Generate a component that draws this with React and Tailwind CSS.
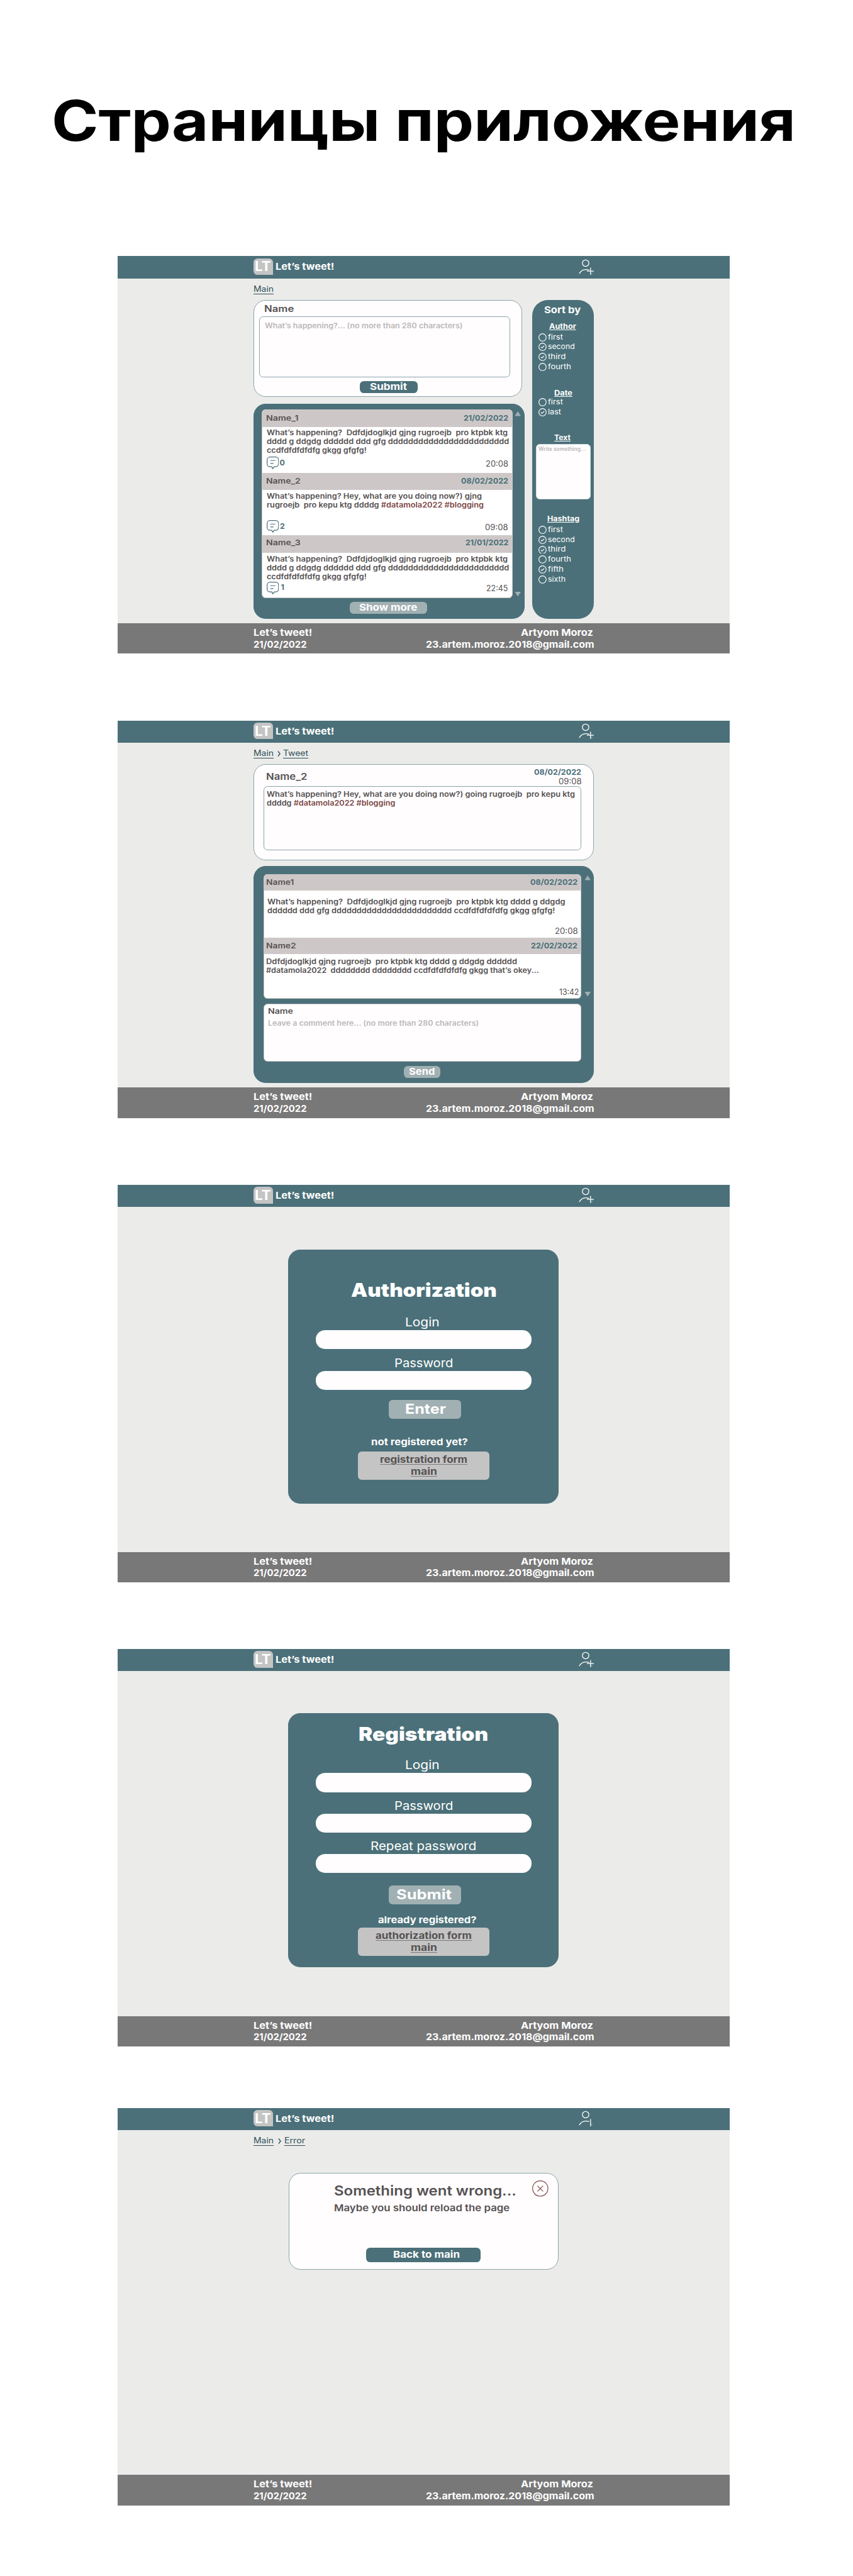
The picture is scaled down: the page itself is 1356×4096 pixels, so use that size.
import { useLayoutEffect, useRef, useState } from "react";

/* One line of text, widened or narrowed so that it spans `w` pixels. */
function Line({ w, className = "", children }) {
  const ref = useRef(null);
  const [ratio, setRatio] = useState(1);
  useLayoutEffect(() => {
    const el = ref.current;
    el.style.transform = "none";
    const next = (w + 1) / el.getBoundingClientRect().width;
    el.style.transform = `scaleX(${next})`;
    setRatio(next);
  }, [w, children]);
  return (
    <span className={`inline-block whitespace-pre ${className}`} style={{ width: w + 1 }}>
      <span ref={ref} className="block w-max origin-left" style={{ transform: `scaleX(${ratio})` }}>
        {children}
      </span>
    </span>
  );
}

function UserIcon({ plus = true }) {
  return (
    <svg viewBox="0 0 38 40" className="mt-[4.5px] h-[25.7px] w-[24.5px]" fill="none" stroke="#fff" strokeWidth="2">
      <circle cx="17" cy="10" r="8" />
      <path d="M1.3 36C5 29.4 10 26 17 26c3 0 6 .3 8.6 1.1" />
      <path d="M29.2 21v18" />
      {plus && <path d="M20.2 29.7H38" />}
      <path d="M32.6 33.4v2.6" strokeWidth="1" />
    </svg>
  );
}

function CommentIcon() {
  return (
    <svg viewBox="0 0 30 31" className="h-[20px] w-[19.4px]" fill="none" stroke="#4B7079" strokeWidth="1.9" strokeLinejoin="round" strokeLinecap="round">
      <path d="M8 1h14a7 7 0 0 1 7 7v10a7 7 0 0 1-7 7h-3.5L15 30l-2.500-5H8a7 7 0 0 1-7-7V8a7 7 0 0 1 7-7z" />
      <path d="M9.500 9.700h11M9.500 16.800h6.500" />
    </svg>
  );
}

function Arrow({ down }) {
  return (
    <svg viewBox="0 0 10 8" className="h-[7.6px] w-[10.4px]" fill="#A0AFB3">
      <path d={down ? "M0 0h10L5 8z" : "M0 8h10L5 0z"} />
    </svg>
  );
}

function Frame({ className = "", plus, children }) {
  return (
    <section className={`ml-[187.2px] flex h-[632px] w-[972.6px] flex-col bg-[#EBEBE9] ${className}`}>
      <header className="h-[35.4px] bg-[#4B7079]">
        <div className="mx-auto flex w-[541.3px] justify-between">
          <div className="flex">
            <div className="mt-[3.2px] flex h-[26.500px] w-[30.8px] items-center justify-center rounded-[6.4px] rounded-br-none bg-[#C4C4C4] text-[21px] leading-none font-bold text-white">
              <Line w={24.6}>LT</Line>
            </div>
            <div className="ml-[4.8px] text-[14.8px] leading-[35.8px] font-bold text-white">
              <Line w={92.4}>Let’s tweet!</Line>
            </div>
          </div>
          <UserIcon plus={plus} />
        </div>
      </header>
      <main className="mx-auto flex w-[541.3px] flex-1 flex-col">{children}</main>
      <footer className="h-[48.3px] bg-[#787878] text-[14.8px] leading-[18.5px] font-bold text-white">
        <div className="mx-auto flex w-[541.3px] justify-between pt-[6.2px] pl-[0.5px]">
          <div className="flex flex-col items-start">
            <Line w={92.4}>Let’s tweet!</Line>
            <Line w={83.5}>21/02/2022</Line>
          </div>
          <div className="flex flex-col items-end">
            <Line w={113.9} className="mr-[1px]">Artyom Moroz</Line>
            <Line w={266.6}>23.artem.moroz.2018@gmail.com</Line>
          </div>
        </div>
      </footer>
    </section>
  );
}

function Crumbs({ page, w, gap = "ml-[5.8px]" }) {
  return (
    <nav className="flex h-[34.1px] items-center pt-[1.2px] text-[12.4px] text-[#2F505A]">
      <Line w={31} className="underline underline-offset-[2.6px]">Main</Line>
      {page && (
        <>
          <svg viewBox="0 0 5 9" className={`h-[9px] w-[5.4px] ${gap}`} fill="none" stroke="#2F505A" strokeWidth="1.3">
            <path d="M.7.500 3.900 4.500.7 8.500" />
          </svg>
          <Line w={w} className="ml-[4px] underline underline-offset-[2.6px]">{page}</Line>
        </>
      )}
    </nav>
  );
}

function Band({ className, name, nw, date, dw }) {
  return (
    <div className={`flex items-center justify-between bg-[#CDC8C7] text-[12.4px] font-semibold ${className}`}>
      <Line w={nw} className="text-[#555152]">{name}</Line>
      <Line w={dw} className="font-bold text-[#4B7079]">{date}</Line>
    </div>
  );
}

const Tag = ({ children }) => <span className="text-[#7B4644]">{children}</span>;

function Tweet({ band, body, name, nw, date, dw, lines, count, countClass, time, tw }) {
  return (
    <article>
      <Band className={`pr-[5.600px] pl-[5.900px] ${band}`} name={name} nw={nw} date={date} dw={dw} />
      <div className={`flex flex-col justify-between pt-[2.500px] pr-[5.800px] pl-[6.8px] ${body}`}>
        <div className="flex flex-col text-[11.2px] leading-[14.2px] font-semibold text-[#555152]">
          {lines.map(([text, w], i) => (
            <Line key={i} w={w} className="self-start">{text}</Line>
          ))}
        </div>
        <div className="flex items-center">
          <CommentIcon />
          <span className={`text-[12.4px] leading-none font-bold text-[#4B7079] ${countClass}`}>{count}</span>
          <Line w={tw} className="mt-[4px] ml-auto text-[12.4px] leading-none text-[#555152]">{time}</Line>
        </div>
      </div>
    </article>
  );
}

const longText = [
  ["What’s happening?  Ddfdjdoglkjd gjng rugroejb  pro ktpbk ktg", 382.2],
  ["dddd g ddgdg dddddd ddd gfg dddddddddddddddddddddddd", 384.3],
  ["ccdfdfdfdfdfg gkgg gfgfg!", 157.8],
];

function Option({ label, w, checked }) {
  return (
    <label className="flex flex-1 items-center pl-[9.6px]">
      <svg viewBox="0 0 20 20" className="h-[12.9px] w-[12.9px]" fill="none" stroke="#fff" strokeWidth="1.8">
        <circle cx="10" cy="10" r="9" />
        {checked && <path d="M6 10.500l2.800 2.300L14 7.600" />}
      </svg>
      <Line w={w} className="ml-[2.6px] text-[11.2px] leading-none">{label}</Line>
    </label>
  );
}

function Heading({ w, className, children }) {
  return (
    <div className={`text-center text-[11.2px] leading-[14px] font-bold ${className}`}>
      <Line w={w} className="underline underline-offset-[1.2px]">{children}</Line>
    </div>
  );
}

function Sidebar() {
  return (
    <aside className="h-[507.2px] w-[97.8px] rounded-[25px] bg-[#4B7079] pt-[6.6px] text-white">
      <div className="pr-[2px] text-center text-[14.8px] leading-[20px] font-bold">
        <Line w={57.2}>Sort by</Line>
      </div>
      <Heading w={41.8} className="mt-[8.3px] pr-[2px]">Author</Heading>
      <div className="mt-[2.500px] flex h-[62.8px] flex-col">
        <Option label="first" w={23} />
        <Option label="second" w={41.7} checked />
        <Option label="third" w={27.5} checked />
        <Option label="fourth" w={35.8} />
      </div>
      <Heading w={28} className="mt-[26.500px]">Date</Heading>
      <div className="mt-[0.2px] flex h-[31.4px] flex-col">
        <Option label="first" w={23} />
        <Option label="last" w={20} checked />
      </div>
      <Heading w={25} className="mt-[25.6px] pr-[2px]">Text</Heading>
      <div className="mt-[2.9px] ml-[5.700px] h-[88px] w-[87.2px] rounded-[6px] border border-[#D5DDE0] bg-[#FFFDFE] pt-[2.700px] pl-[3px] text-[8.600px] leading-[10px] font-semibold text-[#BAB8B8]">
        <Line w={74} className="align-top">Write something...</Line>
      </div>
      <Heading w={50.2} className="mt-[24.3px]">Hashtag</Heading>
      <div className="mt-[2.500px] flex h-[95.1px] flex-col">
        <Option label="first" w={23} />
        <Option label="second" w={41.7} checked />
        <Option label="third" w={27.5} checked />
        <Option label="fourth" w={35.8} />
        <Option label="fifth" w={24} checked />
        <Option label="sixth" w={27} />
      </div>
    </aside>
  );
}

function MainPage() {
  return (
    <Frame className="mt-[407.4px]">
      <Crumbs />
      <div className="flex justify-between">
        <div className="w-[431.2px]">
          <div className="h-[154.4px] w-[427.600px] rounded-[19.3px] border border-[#8CA4AA] bg-[#FFFDFE] px-[8.4px] pt-[4.9px]">
            <div className="pl-[7.800px] text-[14.6px] leading-[16px] font-semibold text-[#555152]">
              <Line w={46.4} className="align-top">Name</Line>
            </div>
            <div className="mt-[4px] h-[97px] w-[398.6px] rounded-[6.4px] border border-[#8CA4AA] pt-[7.700px] pl-[7.600px] text-[11.2px] leading-[14px] font-semibold text-[#BAB8B8]">
              <Line w={313.500} className="align-top">What’s happening?... (no more than 280 characters)</Line>
            </div>
            <button className="mt-[5.900px] ml-[159.3px] block h-[19.3px] w-[92.2px] rounded-[6.4px] bg-[#4B7079] text-center text-[14.8px] leading-[19.3px] font-bold text-white">
              <Line w={58}>Submit</Line>
            </button>
          </div>
          <div className="mt-[11.1px] h-[341.6px] rounded-[19.3px] bg-[#4B7079] pt-[9px] pl-[13px]">
            <div className="flex">
              <div className="h-[299.6px] w-[398.8px] overflow-hidden rounded-[6.4px] border-x border-b border-[#CDC8C7] bg-white">
                <Tweet band="h-[27.2px]" body="h-[73.600px] pb-[6.2px]" name="Name_1" nw={50.500} date="21/02/2022" dw={70} lines={longText} count="0" countClass="ml-[1.4px]" time="20:08" tw={35} />
                <Tweet
                  band="h-[27.3px]" body="h-[72px] pb-[4.3px]" name="Name_2" nw={53.700} date="08/02/2022" dw={74} count="2" countClass="ml-[2px]" time="09:08" tw={35.600}
                  lines={[
                    ["What’s happening? Hey, what are you doing now?) gjng", 341],
                    [<>rugroejb  pro kepu ktg ddddg <Tag>#datamola2022 #blogging</Tag></>, 344],
                  ]}
                />
                <Tweet band="h-[27.700px] pb-[4px]" body="h-[71.800px] pb-[6.4px]" name="Name_3" nw={53.700} date="21/01/2022" dw={67.4} lines={longText} count="1" countClass="ml-[3.600px]" time="22:45" tw={33.4} />
              </div>
              <div className="ml-[3.800px] flex flex-col justify-between pt-[3px] pb-[2.400px]">
                <Arrow />
                <Arrow down />
              </div>
            </div>
            <button className="mt-[6.1px] ml-[140px] block h-[19.3px] w-[123.4px] rounded-[6.4px] bg-[#A1B0B3] text-center text-[14.8px] leading-[19.3px] font-bold text-white">
              <Line w={91.4}>Show more</Line>
            </button>
          </div>
        </div>
        <Sidebar />
      </div>
    </Frame>
  );
}

function Comment({ body, name, nw, date, dw, lines, time, tw }) {
  return (
    <article>
      <Band className="h-[26.8px] pr-[5.2px] pl-[3.1px]" name={name} nw={nw} date={date} dw={dw} />
      <div className={`flex flex-col justify-between ${body}`}>
        <div className="flex flex-col text-[11.2px] leading-[14.2px] font-semibold text-[#555152]">
          {lines.map(([text, w], i) => (
            <Line key={i} w={w} className="self-start">{text}</Line>
          ))}
        </div>
        <Line w={tw} className="self-end text-[12.4px] leading-[14px] text-[#555152]">{time}</Line>
      </div>
    </article>
  );
}

function TweetPage() {
  return (
    <Frame className="mt-[106.2px]">
      <Crumbs page="Tweet" w={39} />
      <div className="h-[152.500px] rounded-[19.3px] border border-[#8CA4AA] bg-[#FFFDFE] pl-[14.700px]">
        <div className="flex h-[34.4px] w-[505.800px] justify-between pl-[4.6px] text-[#555152]">
          <Line w={64.4} className="pt-[10.8px] text-[14.8px] leading-[16px] font-semibold">Name_2</Line>
          <div className="flex flex-col items-end pt-[4.4px] text-[12.4px] leading-[15px]">
            <Line w={74} className="font-bold text-[#4B7079]">08/02/2022</Line>
            <Line w={35.600}>09:08</Line>
          </div>
        </div>
        <div className="flex h-[101.500px] w-[505.800px] flex-col items-start rounded-[6.4px] border border-[#8CA4AA] pt-[4.3px] pl-[4px] text-[11.2px] leading-[14.2px] font-semibold text-[#555152]">
          <Line w={489}>What’s happening? Hey, what are you doing now?) going rugroejb  pro kepu ktg</Line>
          <Line w={203.4}>ddddg <Tag>#datamola2022 #blogging</Tag></Line>
        </div>
      </div>
      <div className="mt-[9.700px] h-[345px] rounded-[19.3px] bg-[#4B7079] pt-[12.3px] pl-[16.4px]">
        <div className="flex">
          <div className="h-[198.500px] w-[505.2px] overflow-hidden rounded-[6.4px] border-x border-b border-[#CDC8C7] bg-white">
            <Comment
              body="h-[74.2px] pt-[10.500px] pr-[4.4px] pb-[2.500px] pl-[4.6px]" name="Name1" nw={43.3} date="08/02/2022" dw={74.3} time="20:08" tw={35.600}
              lines={[
                ["What’s happening?  Ddfdjdoglkjd gjng rugroejb  pro ktpbk ktg dddd g ddgdg", 472.600],
                ["dddddd ddd gfg dddddddddddddddddddddddd ccdfdfdfdfdfg gkgg gfgfg!", 456.3],
              ]}
            />
            <Comment
              body="h-[70.700px] pt-[4.8px] pr-[2.600px] pb-[2.700px] pl-[3.200px]" name="Name2" nw={46.6} date="22/02/2022" dw={73} time="13:42" tw={30.4}
              lines={[
                ["Ddfdjdoglkjd gjng rugroejb  pro ktpbk ktg dddd g ddgdg dddddd", 398],
                ["#datamola2022  dddddddd dddddddd ccdfdfdfdfdfg gkgg that’s okey...", 432.700],
              ]}
            />
          </div>
          <div className="ml-[4.2px] flex flex-col justify-between pt-[2.800px] pb-[3.800px]">
            <Arrow />
            <Arrow down />
          </div>
        </div>
        <div className="mt-[7.900px] flex h-[91.6px] w-[505.2px] flex-col items-start rounded-[6.4px] border border-[#CDC8C7] bg-[#FFFDFE] pt-[4px] pl-[5.800px] font-semibold">
          <Line w={39} className="text-[12.4px] leading-[14px] text-[#555152]">Name</Line>
          <Line w={334.2} className="mt-[5.200px] text-[11.2px] leading-[14px] text-[#BAB8B8]">Leave a comment here... (no more than 280 characters)</Line>
        </div>
        <button className="mt-[7.600px] ml-[222.500px] block h-[19.3px] w-[58.2px] rounded-[6.4px] bg-[#A1B0B3] text-center text-[14.8px] leading-[19.3px] font-bold text-white">
          <Line w={40.4}>Send</Line>
        </button>
      </div>
    </Frame>
  );
}

function Field({ label, w, shift = "", className }) {
  return (
    <label className={`flex flex-col items-center ${className}`}>
      <Line w={w} className={`text-[18.8px] leading-[24px] ${shift}`}>{label}</Line>
      <span className="block h-[30.2px] w-[343.800px] rounded-[14.4px] bg-[#FFFDFE]" />
    </label>
  );
}

function AuthCard({ className, children }) {
  return (
    <div className={`mx-auto flex h-[404.3px] w-[430px] shrink-0 flex-col items-center rounded-[19.3px] bg-[#4B7079] text-white ${className}`}>
      {children}
    </div>
  );
}

function SubmitButton({ className, textClass, w, children }) {
  return (
    <button className={`ml-[4.4px] h-[29.600px] w-[115.4px] rounded-[6px] bg-[#A1B0B3] text-center text-[22px] leading-[29.600px] font-bold ${className}`}>
      <Line w={w} className={textClass}>{children}</Line>
    </button>
  );
}

function LinkBox({ className, label, w }) {
  return (
    <div className={`flex h-[45.1px] w-[208.4px] flex-col items-center rounded-[6px] bg-[#C4C4C4] pt-[4.2px] text-[14.8px] leading-[18.700px] font-bold text-[#555152] ${className}`}>
      <Line w={w} className="underline decoration-[#7d7b7b] underline-offset-[2px]">{label}</Line>
      <Line w={40.8} className="underline decoration-[#7d7b7b] underline-offset-[2px]">main</Line>
    </div>
  );
}

function AuthorizationPage() {
  return (
    <Frame className="mt-[106.3px]">
      <AuthCard className="mt-[67.3px]">
        <h2 className="mt-[46px] ml-[1px] text-[29.700px] leading-[36px] font-black">
          <Line w={230.800} className="align-top">Authorization</Line>
        </h2>
        <Field label="Login" w={53.6} shift="mr-[5px]" className="mt-[22.700px]" />
        <Field label="Password" w={92.3} className="mt-[10.2px]" />
        <SubmitButton className="mt-[16.1px]" w={64} textClass="ml-[2px]">Enter</SubmitButton>
        <Line w={152.700} className="mt-[28.3px] mr-[12.6px] text-[14.8px] leading-[18px] font-bold">not registered yet?</Line>
        <LinkBox className="mt-[6.500px]" label="registration form" w={138} />
      </AuthCard>
    </Frame>
  );
}

function RegistrationPage() {
  return (
    <Frame className="mt-[106px]">
      <AuthCard className="mt-[66.9px]">
        <h2 className="mt-[15.3px] text-[29.700px] leading-[36px] font-black">
          <Line w={205.2} className="align-top">Registration</Line>
        </h2>
        <Field label="Login" w={53.6} shift="mr-[5px]" className="mt-[20px]" />
        <Field label="Password" w={92.3} className="mt-[10.3px]" />
        <Field label="Repeat password" w={167.2} className="mt-[9.900px]" />
        <SubmitButton className="mt-[20px]" w={87} textClass="mr-[4px]">Submit</SubmitButton>
        <Line w={155.500} className="mt-[15.900px] ml-[12px] text-[14.8px] leading-[18px] font-bold">already registered?</Line>
        <LinkBox className="mt-[3.400px]" label="authorization form" w={151.800} />
      </AuthCard>
    </Frame>
  );
}

function ErrorPage() {
  return (
    <Frame className="mt-[97.700px]" plus={false}>
      <Crumbs page="Error" w={32} gap="ml-[7.400px]" />
      <div className="mx-auto mt-[33.500px] flex h-[154.3px] w-[429.800px] justify-between rounded-[19.3px] border border-[#8CA4AA] bg-[#FFFDFE] pr-[15.600px] pl-[71px]">
        <div className="flex flex-col items-start text-[#555152]">
          <Line w={289} className="mt-[15.600px] text-[21.600px] leading-[24px] font-semibold">Something went wrong...</Line>
          <Line w={278.2} className="mt-[6.800px] text-[14.8px] leading-[18px] font-semibold">Maybe you should reload the page</Line>
          <button className="mt-[54.300px] ml-[51px] h-[22.6px] w-[182.200px] rounded-[6.4px] bg-[#4B7079] pl-[10px] text-center text-[14.8px] leading-[22.6px] font-bold text-white">
            <Line w={105}>Back to main</Line>
          </button>
        </div>
        <svg viewBox="0 0 40 40" className="mt-[11.4px] h-[25.700px] w-[25.700px]" fill="none" stroke="#7B4644" strokeWidth="1.8">
          <circle cx="20" cy="20" r="19" />
          <path d="M13 13.500l14 13.500M27 13.500L13 27" />
        </svg>
      </div>
    </Frame>
  );
}

export default function App() {
  return (
    <div className="flow-root h-[4096px] w-[1356px] overflow-hidden bg-white font-['Inter',sans-serif]">
      <h1 className="-mb-[262.400px] pt-[142.400px] pl-[82px] text-[89px] leading-[100px] font-bold text-black">
        <Line w={1182} className="align-top">Страницы приложения</Line>
      </h1>
      <div className="pt-[20px]">
        <MainPage />
        <TweetPage />
        <AuthorizationPage />
        <RegistrationPage />
        <ErrorPage />
      </div>
    </div>
  );
}
